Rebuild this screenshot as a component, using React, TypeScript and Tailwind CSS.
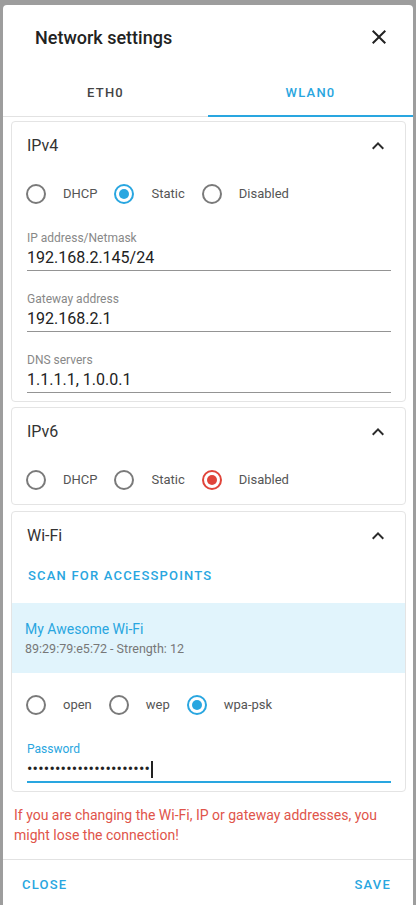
import { useState } from "react";

const BLUE = "#29a6e0";

function Radio({ checked, color = BLUE }: { checked?: boolean; color?: string }) {
  return (
    <span
      className="flex h-5 w-5 shrink-0 items-center justify-center rounded-full border-2"
      style={{ borderColor: checked ? color : "#7a7a7a" }}
    >
      {checked && <span className="h-2.5 w-2.5 rounded-full" style={{ background: color }} />}
    </span>
  );
}

function RadioRow({ items, value, color }: { items: string[]; value: string; color?: string }) {
  return (
    <div className="flex h-12 items-center gap-[17px] pl-[14px]">
      {items.map((it) => (
        <label key={it} className="flex items-center gap-[17px]">
          <Radio checked={it === value} color={color} />
          <span className="text-[13px] text-[#555]">{it}</span>
        </label>
      ))}
    </div>
  );
}

function Chevron() {
  return (
    <svg viewBox="0 0 24 24" className="h-6 w-6 fill-[#2b2b2b]">
      <path d="M12 8l-6 6 1.41 1.41L12 10.83l4.59 4.58L18 14z" />
    </svg>
  );
}

function Section({ title, children, className = "" }: { title: string; children: React.ReactNode; className?: string }) {
  return (
    <div className={`rounded-[4px] border border-[#e4e4e4] bg-white ${className}`}>
      <div className="flex h-12 items-center justify-between pl-[15px] pr-[15px]">
        <span className="text-[16px] text-[#333]">{title}</span>
        <Chevron />
      </div>
      {children}
    </div>
  );
}

function Field({ label, value, first }: { label: string; value: string; first?: boolean }) {
  return (
    <div className={`ml-[15px] mr-[14px] border-b border-[#949494] ${first ? "mt-[12px]" : "mt-[20px]"}`}>
      <div className="text-[12px] leading-4 text-[#888]">{label}</div>
      <div className="text-[16px] leading-6 text-[#222]">{value}</div>
    </div>
  );
}

export default function App() {
  const [tab, setTab] = useState("wlan0");

  return (
    <div className="h-[905px] overflow-hidden bg-[#9d9d9d] px-[3px] pt-[5px] font-['Roboto',sans-serif]">
      <div className="flex flex-col rounded-t-[4px] bg-white">
        {/* header */}
        <div className="flex h-16 shrink-0 items-center justify-between pl-8 pr-[22px]">
          <h2 className="text-[18px] font-medium text-[#222]">Network settings</h2>
          <svg viewBox="0 0 24 24" className="h-6 w-6 fill-[#222]">
            <path d="M19 6.41L17.59 5 12 10.59 6.41 5 5 6.41 10.59 12 5 17.59 6.41 19 12 13.41 17.59 19 19 17.59 13.41 12z" />
          </svg>
        </div>

        {/* tabs */}
        <div className="flex h-[48px] shrink-0 border-b border-[#e2e2e2]">
          {["eth0", "wlan0"].map((t) => (
            <button
              key={t}
              onClick={() => setTab(t)}
              className={`-mb-px flex flex-1 items-center justify-center border-b-2 pt-[1px] text-[13px] font-medium uppercase tracking-[1.2px] ${
                tab === t ? "border-[#29a6e0] text-[#29a6e0]" : "border-transparent text-[#444]"
              }`}
            >
              {t}
            </button>
          ))}
        </div>

        {/* content */}
        <div className="flex flex-col gap-[5px] pl-2 pr-[7px] pt-1">
          <Section title="IPv4">
            <RadioRow items={["DHCP", "Static", "Disabled"]} value="Static" />
            <div className="pb-[8px]">
              <Field first label="IP address/Netmask" value="192.168.2.145/24" />
              <Field label="Gateway address" value="192.168.2.1" />
              <Field label="DNS servers" value="1.1.1.1, 1.0.0.1" />
            </div>
          </Section>

          <Section title="IPv6">
            <RadioRow items={["DHCP", "Static", "Disabled"]} value="Disabled" color="#e0443a" />
          </Section>

          <Section title="Wi-Fi" className="mt-[1px]">
            <div className="mb-[11px] flex h-8 items-center pl-[16px]">
              <button className="text-[13px] font-medium uppercase tracking-[1.2px] text-[#29a6e0]">
                Scan for accesspoints
              </button>
            </div>
            <div className="bg-[#e1f4fc] px-[13px] pb-[15px] pt-[15px]">
              <div className="text-[14px] leading-[22px] text-[#29a6e0]">My Awesome Wi-Fi</div>
              <div className="text-[12.5px] leading-[18px] text-[#777]">89:29:79:e5:72 - Strength: 12</div>
            </div>
            <div className="pt-2">
              <RadioRow items={["open", "wep", "wpa-psk"]} value="wpa-psk" />
            </div>
            <div className="ml-[15px] mr-[14px] mt-[12px] mb-[8px] border-b-2 border-[#29a6e0]">
              <div className="text-[12px] leading-4 text-[#29a6e0]">Password</div>
              <div className="flex h-6 items-center text-[16px] text-[#222]">
                <span className="tracking-[0.2px]">{"\u2022".repeat(22)}</span>
                <span className="ml-[1px] h-[17px] w-[1.5px] bg-[#222]" />
              </div>
            </div>
          </Section>

          <p className="mt-[8px] pb-[14px] pl-[3px] text-[14px] leading-5 text-[#e0544a]">
            If you are changing the Wi-Fi, IP or gateway addresses, you might lose the connection!
          </p>
        </div>

        {/* footer */}
        <div className="flex shrink-0 items-center justify-between border-t border-[#e2e2e2] px-2 pb-[15px] pt-[7px]">
          <button className="h-9 px-[11px] text-[13px] font-medium uppercase tracking-[1.2px] text-[#29a6e0]">
            Close
          </button>
          <button className="h-9 px-[14px] text-[13px] font-medium uppercase tracking-[1.2px] text-[#29a6e0]">
            Save
          </button>
        </div>
      </div>
    </div>
  );
}
